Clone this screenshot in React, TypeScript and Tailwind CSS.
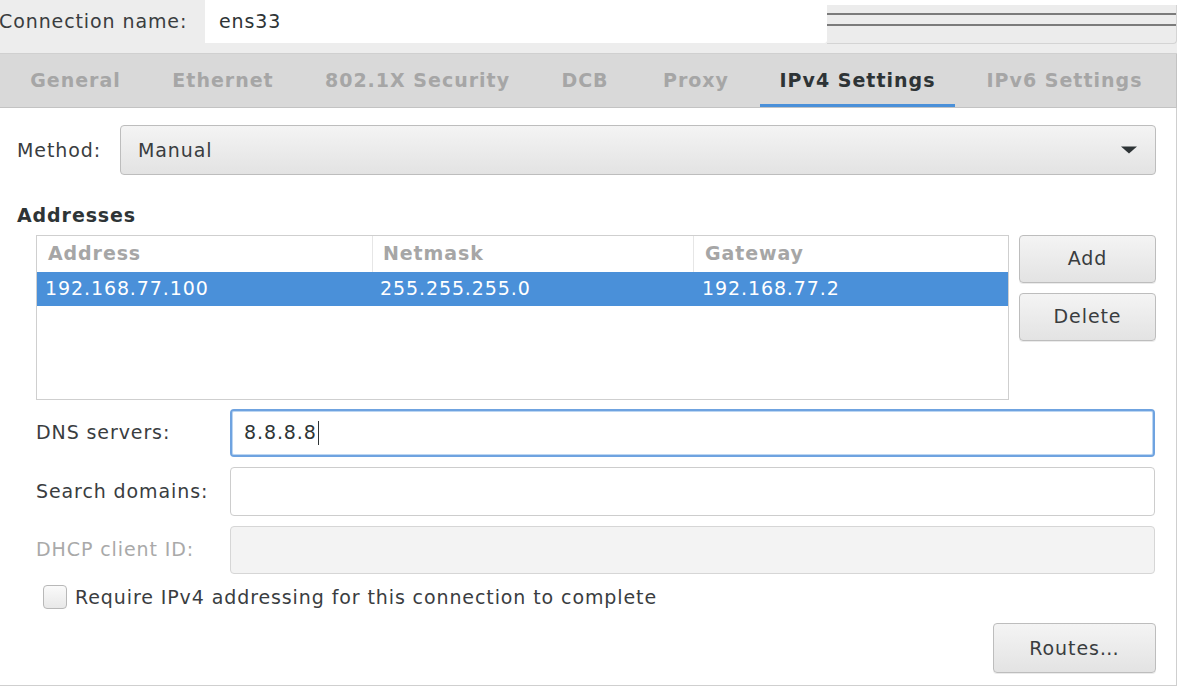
import React from "react";

// tab widths measured so the underline and labels sit where the dialog draws them
const tabs = [
  { label: "General", w: "w-[131px]", mr: "mr-[12px]" },
  { label: "Ethernet", w: "w-[140px]", mr: "mr-[12px]" },
  { label: "802.1X Security", w: "w-[225px]", mr: "mr-[11px]" },
  { label: "DCB", w: "w-[88px]", mr: "mr-[14px]" },
  { label: "Proxy", w: "w-[106px]", mr: "mr-[11px]" },
  { label: "IPv4 Settings", w: "w-[195px]", mr: "mr-[13px]" },
  { label: "IPv6 Settings", w: "w-[193px]", mr: "mr-0" },
];

const font = { fontFamily: '"DejaVu Sans", "Liberation Sans", sans-serif' };

const Button = ({ label, className = "" }: { label: string; className?: string }) => (
  <button
    className={`flex items-center justify-center rounded-[4px] border border-[#bdbdbd] bg-gradient-to-b from-[#f4f4f4] to-[#e3e3e3] text-[#3a3d3f] shadow-[0_1px_0_rgba(0,0,0,0.08)] ${className}`}
  >
    {label}
  </button>
);

const Row = ({
  label,
  muted,
  children,
}: {
  label: string;
  muted?: boolean;
  children: React.ReactNode;
}) => (
  <div className="flex items-center">
    <div className={`w-[194px] shrink-0 ${muted ? "text-[#a9a9a9]" : "text-[#3a3d3f]"}`}>{label}</div>
    {children}
  </div>
);

export default function App() {
  return (
    <div
      className="h-[688px] w-[1180px] overflow-hidden bg-white text-[19px] tracking-[0.9px] text-[#2e3436]"
      style={font}
    >
      <div className="w-[1177px]">
        {/* Connection name */}
        <div className="flex h-[54px] items-start border-b border-[#d0d0d0] bg-[#ededed]">
          <div className="-ml-[1px] flex h-[43px] w-[206px] items-center text-[#3a3d3f]">Connection name:</div>
          <div className="flex h-[43px] w-[622px] items-center rounded-br-[3px] bg-white pl-[14px] text-[#2e3436]">
            ens33
          </div>
          <div className="flex h-[44px] flex-1 flex-col">
            <div className="h-[5px] bg-white" />
            <div className="flex-1 rounded-br-[4px] border-r border-b border-[#d4d4d4] bg-[#ececec] pt-[8px]">
              <div className="h-[2px] bg-[#7b7b7b]" />
              <div className="mt-[9px] h-[2px] bg-[#7b7b7b]" />
            </div>
          </div>
        </div>

        {/* Tabs */}
        <div className="flex h-[54px] items-stretch border-r border-b border-[#c3c3c3] bg-[#d9d9d9] pl-[10px] font-bold tracking-[1px]">
          {tabs.map((t) => {
            const active = t.label === "IPv4 Settings";
            return (
              <div
                key={t.label}
                className={`flex shrink-0 items-center justify-center whitespace-nowrap border-b-[3px] pt-[3px] ${t.w} ${t.mr} ${
                  active ? "border-[#4a90d9] text-[#2e3436]" : "border-transparent text-[#a6a6a6]"
                }`}
              >
                {t.label}
              </div>
            );
          })}
        </div>

        {/* Content */}
        <div className="flex h-[578px] flex-col border-r border-b border-[#cfcfcf] pt-[17px] pr-[20px] pl-[17px]">
          <div className="flex items-center">
            <div className="w-[103px] shrink-0 text-[#3a3d3f]">Method:</div>
            <div className="flex h-[50px] flex-1 items-center justify-between rounded-[4px] border border-[#bdbdbd] bg-gradient-to-b from-[#f4f4f4] to-[#e3e3e3] pr-[17px] pl-[17px] text-[#3a3d3f]">
              <span>Manual</span>
              <svg width="18" height="8" viewBox="0 0 18 8">
                <path d="M1 0.5 L17 0.5 L9 7.5 Z" fill="#2e3436" />
              </svg>
            </div>
          </div>

          <div className="mt-[26px] font-bold text-[#2e3436]">Addresses</div>

          <div className="mt-[5px] flex pl-[19px]">
            <div className="h-[165px] w-[973px] border border-[#cfcfcf] bg-white">
              <div className="flex h-[36px] font-bold text-[#a6a6a6]">
                <div className="flex w-[336px] items-center border-r border-[#e6e6e6] pl-[11px]">Address</div>
                <div className="flex w-[321px] items-center border-r border-[#e6e6e6] pl-[10px]">Netmask</div>
                <div className="flex flex-1 items-center pl-[11px]">Gateway</div>
              </div>
              <div className="flex h-[34px] bg-[#4a90d9] text-white">
                <div className="flex w-[336px] items-center pl-[8px]">192.168.77.100</div>
                <div className="flex w-[321px] items-center pl-[7px]">255.255.255.0</div>
                <div className="flex flex-1 items-center pl-[8px]">192.168.77.2</div>
              </div>
            </div>
            <div className="ml-[10px] flex flex-1 flex-col gap-[10px]">
              <Button label="Add" className="h-[48px] w-full" />
              <Button label="Delete" className="h-[48px] w-full" />
            </div>
          </div>

          <div className="mt-[9px] flex flex-col gap-[10px] pl-[19px] pr-[1px]">
            <Row label="DNS servers:">
              <div className="flex h-[48px] flex-1 items-center rounded-[4px] border-2 border-[#6fa3e0] pl-[12px] text-[#2e3436] shadow-[inset_0_0_0_1px_#bcd6f2]">
                8.8.8.8
                <span className="ml-[1px] inline-block h-[24px] w-[1.5px] bg-[#2e3436]" />
              </div>
            </Row>
            <Row label="Search domains:">
              <div className="h-[49px] flex-1 rounded-[4px] border border-[#cdcdcd] bg-white" />
            </Row>
            <Row label="DHCP client ID:" muted>
              <div className="h-[48px] flex-1 rounded-[4px] border border-[#d6d6d6] bg-[#f3f3f3]" />
            </Row>
          </div>

          <div className="mt-[9px] flex items-center pl-[26px] text-[#3a3d3f]">
            <div className="mr-[8px] h-[24px] w-[24px] rounded-[4px] border border-[#b8b8b8] bg-gradient-to-b from-[#fafafa] to-[#e8e8e8]" />
            <span>Require IPv4 addressing for this connection to complete</span>
          </div>

          <div className="mt-[12px] flex justify-end">
            <Button label="Routes…" className="h-[50px] w-[163px]" />
          </div>
        </div>
      </div>
    </div>
  );
}
